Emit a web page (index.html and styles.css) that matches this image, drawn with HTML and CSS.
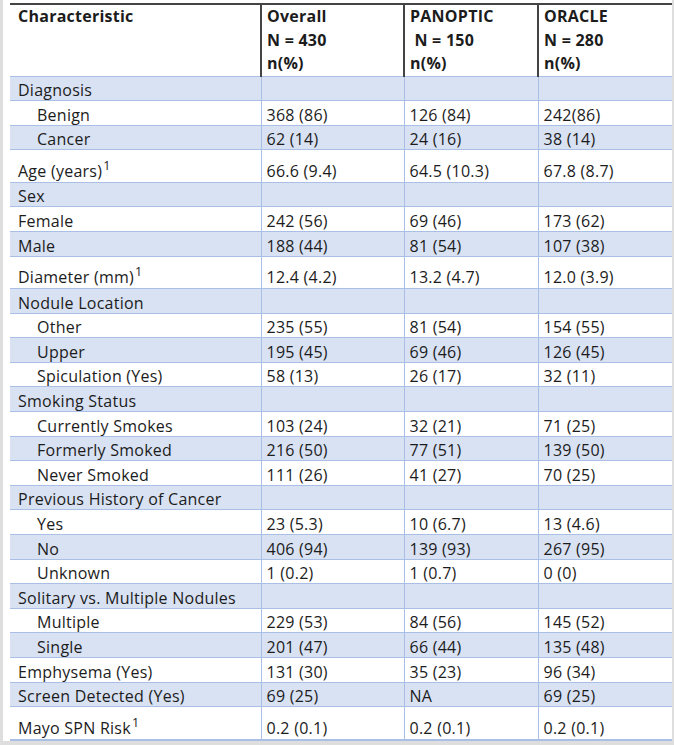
FILE: index.html
```html
<!DOCTYPE html>
<html>
<head>
<meta charset="utf-8">
<link rel="stylesheet" href="styles.css">
</head>
<body>
<div class="page">
<table class="tbl">
  <colgroup>
    <col class="c1"><col class="c2"><col class="c3"><col class="c4">
  </colgroup>
  <thead>
    <tr class="head">
      <th>Characteristic</th>
      <th>Overall<br>N = 430<br>n(%)</th>
      <th>PANOPTIC<br>&nbsp;N = 150<br>n(%)</th>
      <th>ORACLE<br>N = 280<br>n(%)</th>
    </tr>
  </thead>
  <tbody>
    <tr class="s"><td>Diagnosis</td><td></td><td></td><td></td></tr>
    <tr><td class="ind">Benign</td><td>368 (86)</td><td>126 (84)</td><td>242(86)</td></tr>
    <tr class="s"><td class="ind">Cancer</td><td>62 (14)</td><td>24 (16)</td><td>38 (14)</td></tr>
    <tr class="tall"><td>Age (years)<sup>1</sup></td><td>66.6 (9.4)</td><td>64.5 (10.3)</td><td>67.8 (8.7)</td></tr>
    <tr class="s"><td>Sex</td><td></td><td></td><td></td></tr>
    <tr><td>Female</td><td>242 (56)</td><td>69 (46)</td><td>173 (62)</td></tr>
    <tr class="s"><td>Male</td><td>188 (44)</td><td>81 (54)</td><td>107 (38)</td></tr>
    <tr class="tall t2"><td>Diameter (mm)<sup>1</sup></td><td>12.4 (4.2)</td><td>13.2 (4.7)</td><td>12.0 (3.9)</td></tr>
    <tr class="s"><td>Nodule Location</td><td></td><td></td><td></td></tr>
    <tr><td class="ind">Other</td><td>235 (55)</td><td>81 (54)</td><td>154 (55)</td></tr>
    <tr class="s"><td class="ind">Upper</td><td>195 (45)</td><td>69 (46)</td><td>126 (45)</td></tr>
    <tr><td class="ind">Spiculation (Yes)</td><td>58 (13)</td><td>26 (17)</td><td>32 (11)</td></tr>
    <tr class="s"><td>Smoking Status</td><td></td><td></td><td></td></tr>
    <tr><td class="ind">Currently Smokes</td><td>103 (24)</td><td>32 (21)</td><td>71 (25)</td></tr>
    <tr class="s"><td class="ind">Formerly Smoked</td><td>216 (50)</td><td>77 (51)</td><td>139 (50)</td></tr>
    <tr><td class="ind">Never Smoked</td><td>111 (26)</td><td>41 (27)</td><td>70 (25)</td></tr>
    <tr class="s"><td>Previous History of Cancer</td><td></td><td></td><td></td></tr>
    <tr><td class="ind">Yes</td><td>23 (5.3)</td><td>10 (6.7)</td><td>13 (4.6)</td></tr>
    <tr class="s"><td class="ind">No</td><td>406 (94)</td><td>139 (93)</td><td>267 (95)</td></tr>
    <tr><td class="ind">Unknown</td><td>1 (0.2)</td><td>1 (0.7)</td><td>0 (0)</td></tr>
    <tr class="s"><td>Solitary vs. Multiple Nodules</td><td></td><td></td><td></td></tr>
    <tr><td class="ind">Multiple</td><td>229 (53)</td><td>84 (56)</td><td>145 (52)</td></tr>
    <tr class="s"><td class="ind">Single</td><td>201 (47)</td><td>66 (44)</td><td>135 (48)</td></tr>
    <tr><td>Emphysema (Yes)</td><td>131 (30)</td><td>35 (23)</td><td>96 (34)</td></tr>
    <tr class="s"><td>Screen Detected (Yes)</td><td>69 (25)</td><td>NA</td><td>69 (25)</td></tr>
    <tr class="tall last"><td>Mayo SPN Risk<sup>1</sup></td><td>0.2 (0.1)</td><td>0.2 (0.1)</td><td>0.2 (0.1)</td></tr>
  </tbody>
</table>
</div>
</body>
</html>
```

FILE: styles.css
```css
html, body {
  margin: 0;
  padding: 0;
  background: #dedede;
}
body {
  width: 674px;
  height: 745px;
  overflow: hidden;
}
.page {
  margin-left: 3px;
  width: 669px;
  height: 741px;
  background: #ffffff;
  padding: 3px 0 0 7px;
  box-sizing: border-box;
  overflow: hidden;
}
.tbl {
  border-collapse: collapse;
  table-layout: fixed;
  width: 662px;
  font-family: "Open Sans", "Noto Sans", sans-serif;
  font-size: 16px;
  letter-spacing: 0.25px;
  color: #1c1c1c;
}
.c1 { width: 251px; }
.c2 { width: 143px; }
.c3 { width: 134px; }
.c4 { width: 134px; }
.head th {
  text-align: left;
  vertical-align: top;
  font-weight: 700;
  line-height: 23.5px;
  padding: 0 5px 0 5px;
  border-top: 2px solid #444;
  border-left: 2px solid #444;
  border-bottom: 1px solid #a9bfe5;
}
.head th:first-child {
  border-left: none;
  padding-left: 8px;
}
td {
  height: 23.6px;
  padding: 0 5px 0 5px;
  line-height: 20px;
  vertical-align: bottom;
  border-bottom: 1px solid #a9bfe5;
  border-left: 1px solid #a9bfe5;
  white-space: nowrap;
}
td:first-child {
  border-left: none;
  padding-left: 8px;
}
td.ind { padding-left: 27px; }
tr.s td { background: #d9e2f3; }
tr.tall td { height: 30.5px; padding-bottom: 1px; }
tr.last td { border-bottom: 2px solid #a9bfe5; }
sup {
  font-size: 12.5px;
  line-height: 0;
  vertical-align: 7px;
  margin-left: 1px;
}
```
